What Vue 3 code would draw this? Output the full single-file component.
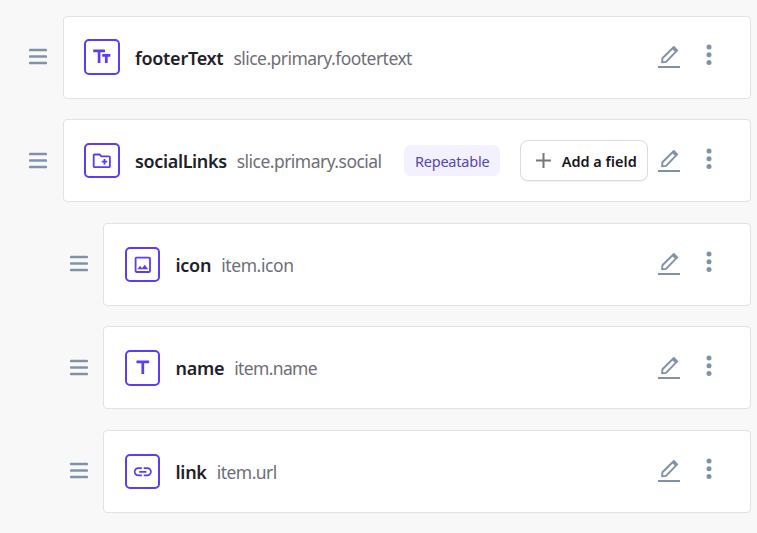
<script setup>
const icons = {
  richText: 'M2.5 4v3h5v12h3V7h5V4h-13zm19 5h-9v3h3v7h3v-7h3V9z',
  group: 'M20 6h-8l-2-2H4c-1.11 0-1.99.89-1.99 2L2 18c0 1.11.89 2 2 2h16c1.11 0 2-.89 2-2V8c0-1.11-.89-2-2-2zm0 12H4V6h5.17l2 2H20v10zm-8-4h2v2h2v-2h2v-2h-2v-2h-2v2h-2v2z',
  image: 'M19 5v14H5V5h14m0-2H5c-1.1 0-2 .9-2 2v14c0 1.1.9 2 2 2h14c1.1 0 2-.9 2-2V5c0-1.1-.9-2-2-2zm-4.86 8.86-3 3.87L9 13.14 6 17h12l-3.86-5.14z',
  title: 'M5 4v3h5.5v12h3V7H19V4H5z',
  link: 'M3.9 12c0-1.71 1.39-3.1 3.1-3.1h4V7H7c-2.76 0-5 2.24-5 5s2.24 5 5 5h4v-1.9H7c-1.71 0-3.1-1.39-3.1-3.1zM8 13h8v-2H8v2zm9-6h-4v1.9h4c1.71 0 3.1 1.39 3.1 3.1s-1.39 3.1-3.1 3.1h-4V17h4c2.76 0 5-2.24 5-5s-2.24-5-5-5z',
}
const fields = [
  { name: 'footerText', path: 'slice.primary.footertext', icon: 'richText' },
  { name: 'socialLinks', path: 'slice.primary.social', icon: 'group', repeatable: true },
  { name: 'icon', path: 'item.icon', icon: 'image', nested: true },
  { name: 'name', path: 'item.name', icon: 'title', nested: true },
  { name: 'link', path: 'item.url', icon: 'link', nested: true },
]
</script>

<template>
  <main class="fields">
    <div v-for="f in fields" :key="f.name" class="row" :class="[f.icon, { nested: f.nested }]">
      <svg class="handle" width="18" height="17" viewBox="0 0 18 17">
        <path d="M1.2 2h15.6M1.2 8.5h15.6M1.2 15h15.6" />
      </svg>
      <section class="card">
        <span class="type">
          <svg width="21.6" height="21.6" viewBox="0 0 24 24"><path :d="icons[f.icon]" /></svg>
        </span>
        <span class="name">{{ f.name }}</span>
        <span class="path">{{ f.path }}</span>
        <span class="spacer"></span>
        <template v-if="f.repeatable">
          <span class="badge"><span>Repeatable</span></span>
          <button class="add">
            <svg width="15" height="15" viewBox="0 0 15 15"><path d="M7.5 0v15M0 7.5h15" /></svg>
            <span>Add a field</span>
          </button>
        </template>
        <svg class="edit" width="22" height="24" viewBox="0 0 22 24">
          <path class="pencil" d="M4.1 17.4l.3-4.2L15.8 2l3.4 3.4L8 16.9zM14.8 3.4l3.2 3.2" />
          <path class="rule" d="M0 22h22" />
        </svg>
        <svg class="more" width="6" height="22" viewBox="0 0 6 22">
          <circle cx="3" cy="3" r="2.5" /><circle cx="3" cy="10.8" r="2.5" /><circle cx="3" cy="18.6" r="2.5" />
        </svg>
      </section>
    </div>
  </main>
</template>

<style>
body { background: #f8f8f8; }
</style>

<style scoped>
.fields {
  box-sizing: border-box;
  height: 533px;
  padding: 15.9px 6px 0 29px;
  display: flex;
  flex-direction: column;
  gap: 20.5px;
  background: #f8f8f8;
  font-family: "Segoe UI", "Noto Sans", "Open Sans", sans-serif;
  overflow: hidden;
}
.row { display: flex; align-items: center; gap: 16px; height: 83px; flex: none; }
.nested { padding-left: 41px; gap: 15px; }
.handle { flex: none; margin-bottom: 1.6px; }
.handle path { stroke: #8092a9; stroke-width: 2.7; stroke-linecap: round; fill: none; }
.card {
  box-sizing: border-box;
  flex: 1;
  height: 83px;
  display: flex;
  align-items: center;
  padding: 0 38.5px 0 20px;
  border: 1px solid #e2e2e4;
  border-radius: 4px;
  background: #fff;
  white-space: nowrap;
}
.nested .card { padding-left: 21px; }
.type {
  box-sizing: border-box;
  flex: none;
  width: 36px;
  height: 36px;
  margin-bottom: 1px;
  display: flex;
  align-items: center;
  justify-content: center;
  border: 2px solid #5b3df5;
  border-radius: 5px;
  color: #5b3df5;
}
.group .type { height: 35px; }
.nested .type { width: 35px; height: 35px; margin-bottom: 0; }
.title .type { height: 36px; }
.type svg { fill: currentColor; }
.name { margin-left: 15px; color: #1f2128; font-size: 18px; font-weight: 600; line-height: 26px; letter-spacing: -0.27px; margin-top: 1px; }
.group .name { letter-spacing: -0.35px; }
.nested .name { margin-left: 15.5px; }
.path { margin-left: 10px; color: #6f6e77; font-size: 17.5px; line-height: 26px; letter-spacing: -0.53px; margin-top: 1px; }
.image .path { letter-spacing: -0.4px; }
.title .path { letter-spacing: -0.65px; }
.spacer { flex: 1; }
.badge {
  flex: none;
  width: 96px;
  height: 31px;
  margin-right: 20px;
  border-radius: 7px;
  background: #f3f0ff;
  color: #5746af;
  font-size: 14.5px;
  line-height: 32px;
  letter-spacing: -0.2px;
  text-align: center;
}
.add {
  box-sizing: border-box;
  flex: none;
  width: 128px;
  height: 41px;
  display: flex;
  align-items: center;
  gap: 10.5px;
  margin-right: 10px;
  padding: 0 0 0 15px;
  border: 1px solid #dcdbdd;
  border-radius: 8px;
  background: #fff;
  box-shadow: 0 1px 1px rgba(0, 0, 0, .06);
  color: #1a1523;
  font-family: inherit;
  font-size: 14.5px;
  font-weight: 600;
  letter-spacing: 0;
}
.add path { stroke: #77767e; stroke-width: 2; }
.edit { flex: none; margin-right: 25.3px; margin-bottom: 0; }
.edit path { fill: none; stroke: #8092a9; }
.edit .pencil { stroke-width: 1.9; stroke-linejoin: round; }
.edit .rule { stroke-width: 2; }
.more { flex: none; fill: #8092a9; margin-bottom: 4.4px; }
</style>
